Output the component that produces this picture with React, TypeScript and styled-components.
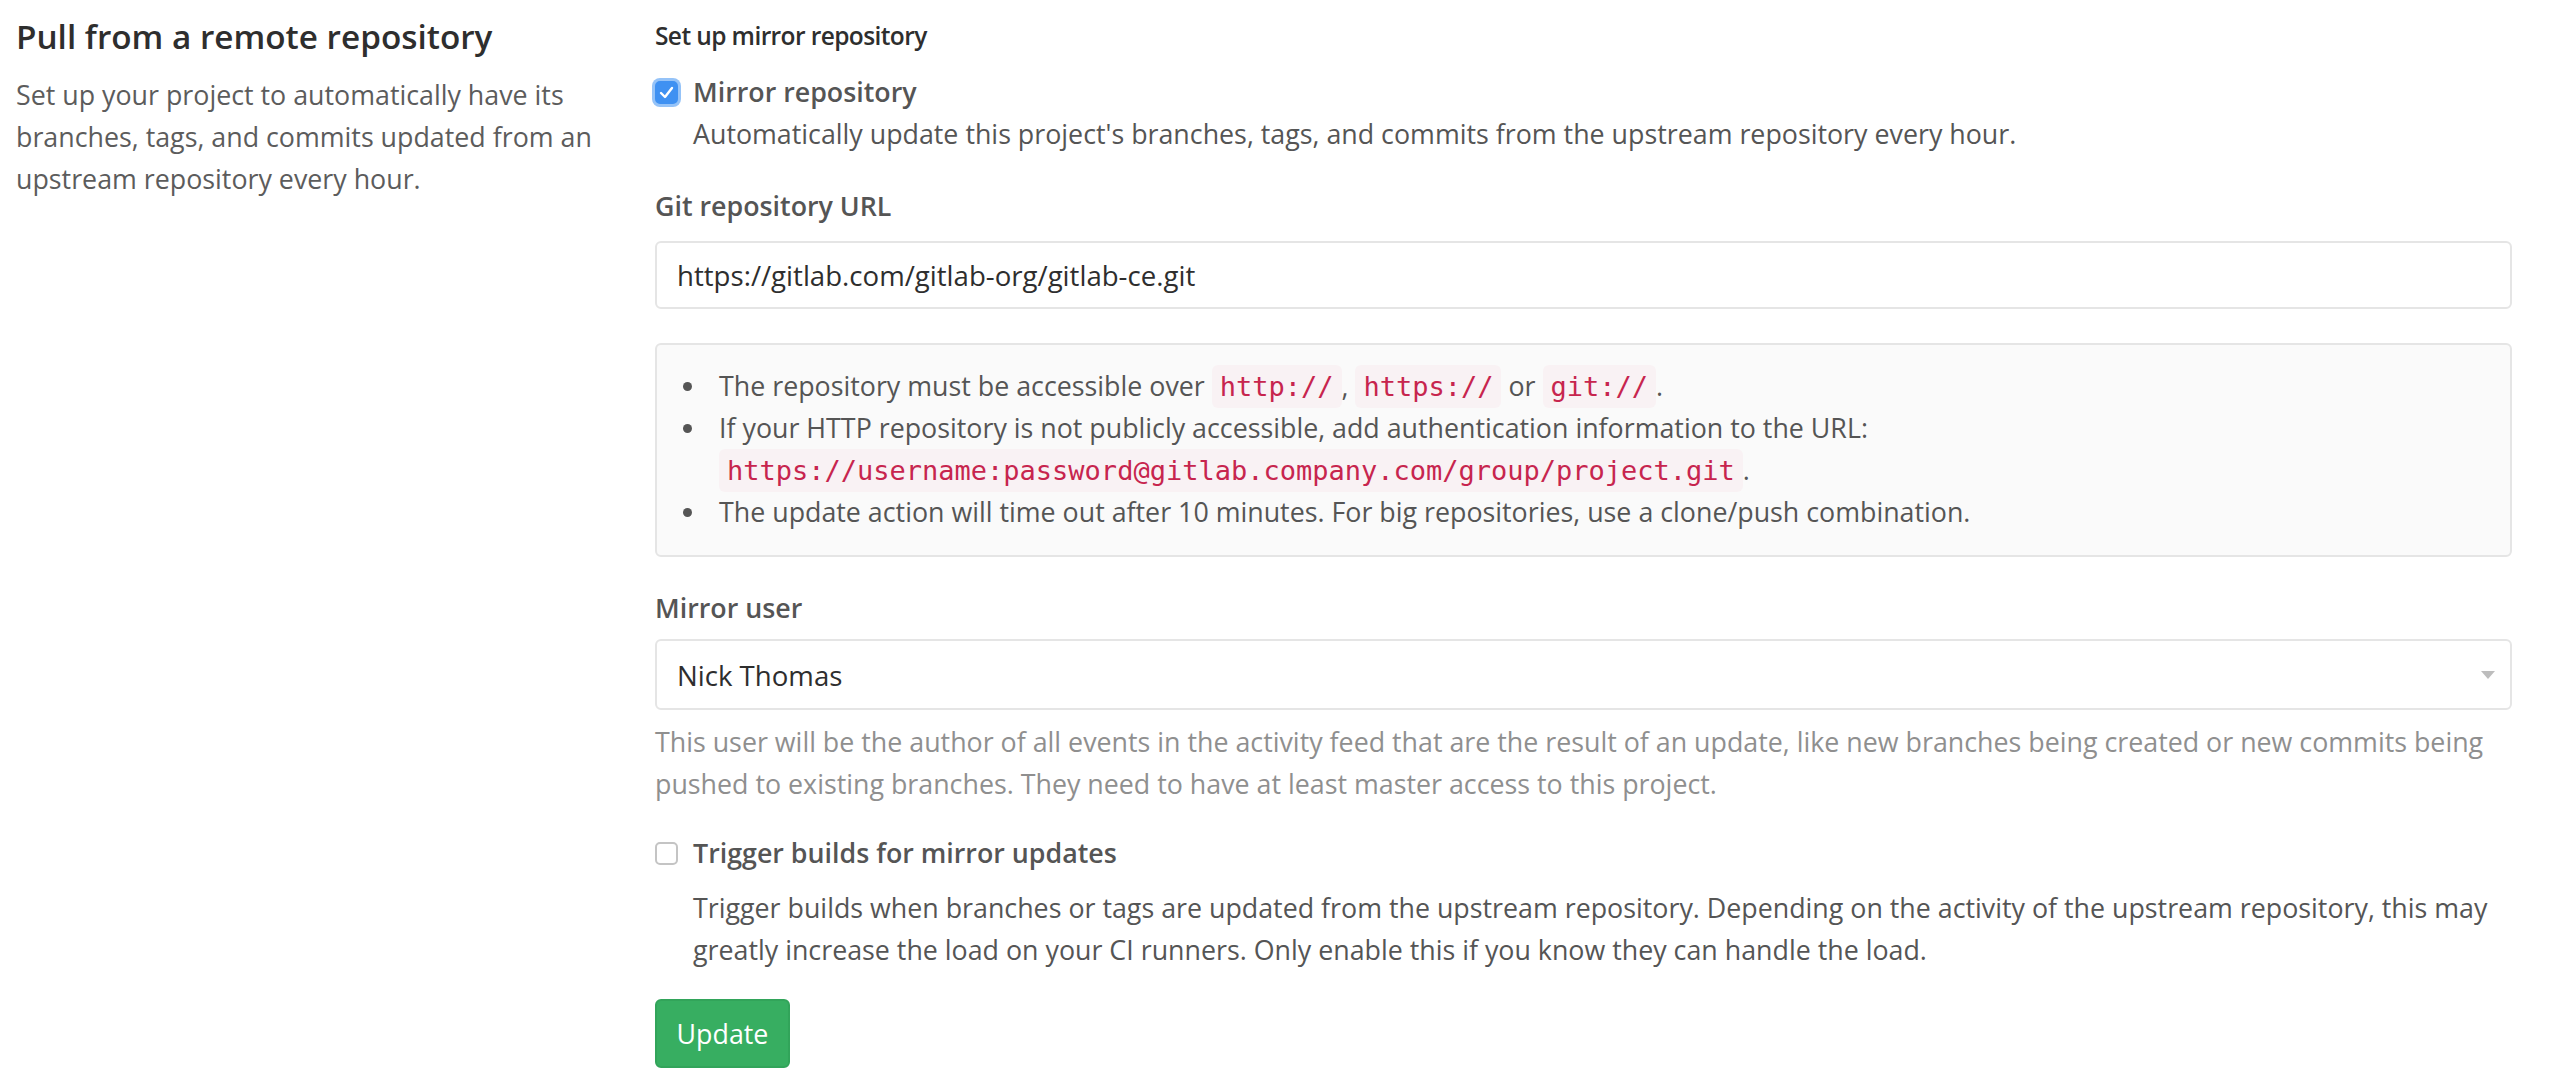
import styled, { createGlobalStyle } from "styled-components";

const Global = createGlobalStyle`
  body {
    margin: 0;
    background: #fff;
    font-family: "Open Sans", "Noto Sans", sans-serif;
    color: #555;
  }
  * {
    box-sizing: border-box;
  }
`;

const Page = styled.div`
  display: flex;
  padding: 0 40px 0 16px;
`;

const Side = styled.aside`
  width: 639px;
  flex-shrink: 0;
`;

const SideTitle = styled.h4`
  margin: 12px 0 0;
  font-size: 33.3px;
  line-height: 48px;
  font-weight: 600;
  color: #2e2e2e;
`;

const SideText = styled.p`
  margin: 14px 0 0;
  width: 610px;
  font-size: 26.8px;
  line-height: 42px;
  color: #5c5c5c;
`;

const Main = styled.main`
  flex: 1;
  min-width: 0;
  font-size: 26.8px;
  line-height: 42px;
`;

const GroupTitle = styled.h5`
  margin: 15px 0 0;
  font-size: 24.5px;
  letter-spacing: -0.6px;
  line-height: 42px;
  font-weight: 600;
  color: #2e2e2e;
`;

const CheckRow = styled.div<{ $top: number }>`
  display: grid;
  grid-template-columns: 38px 1fr;
  margin-top: ${(p) => p.$top}px;
`;

const Box = styled.span<{ $checked?: boolean }>`
  width: 23px;
  height: 23px;
  margin-top: 10px;
  border-radius: 5px;
  display: flex;
  align-items: center;
  justify-content: center;
  border: 2px solid ${(p) => (p.$checked ? "#3f91f2" : "#c4c4c4")};
  background: ${(p) => (p.$checked ? "#3f91f2" : "#fff")};
  box-shadow: ${(p) => (p.$checked ? "0 0 0 3px #95c3f8" : "none")};
`;

const CheckLabel = styled.div`
  font-weight: 600;
  color: #555;
`;

const CheckHelp = styled.div<{ $top?: number }>`
  margin-top: ${(p) => p.$top ?? 0}px;
  color: #555;
`;

const FieldLabel = styled.div<{ $top: number }>`
  margin-top: ${(p) => p.$top}px;
  font-weight: 600;
  color: #555;
`;

const Field = styled.div<{ $top?: number; $height?: number }>`
  margin-top: ${(p) => p.$top ?? 14}px;
  height: ${(p) => p.$height ?? 68}px;
  border: 2px solid #e5e5e5;
  border-radius: 6px;
  display: flex;
  align-items: center;
  justify-content: space-between;
  padding: 0 15px 0 20px;
  color: #2e2e2e;
  font-size: 27.6px;
`;

const Caret = styled.span`
  width: 0;
  height: 0;
  border-left: 7px solid transparent;
  border-right: 7px solid transparent;
  border-top: 8px solid #bdbdbd;
`;

const InfoBox = styled.div`
  margin-top: 34px;
  background: #fafafa;
  border: 2px solid #e5e5e5;
  border-radius: 6px;
  padding: 20px 20px 22px 26px;
`;

const List = styled.ul`
  margin: 0;
  padding: 0;
  list-style: none;
`;

const Item = styled.li`
  display: flex;
  align-items: flex-start;
  line-height: 42px;
`;

const Dot = styled.span`
  width: 9px;
  height: 9px;
  border-radius: 50%;
  background: #555;
  margin: 17px 27px 0 0;
  flex-shrink: 0;
`;

const Code = styled.code`
  font-family: "DejaVu Sans Mono", "Liberation Mono", monospace;
  font-size: 27px;
  line-height: 1;
  color: #c7254e;
  background: #f9f2f4;
  padding: 6px 8px;
  border-radius: 6px;
`;

const Muted = styled.p`
  margin: 11px 0 0;
  color: #8f8f8f;
`;

const Button = styled.button`
  margin-top: 28px;
  width: 135px;
  height: 69px;
  border: 2px solid #32a45a;
  border-radius: 6px;
  background: #37ae61;
  color: #fff;
  font-family: inherit;
  font-size: 26.8px;
`;

const Check = () => (
  <svg width="15" height="13" viewBox="0 0 15 13">
    <path d="M2 7l4 4 7-9" fill="none" stroke="#fff" strokeWidth="2.4" strokeLinecap="round" strokeLinejoin="round" />
  </svg>
);

export default function App() {
  return (
    <>
      <Global />
      <Page>
        <Side>
          <SideTitle>Pull from a remote repository</SideTitle>
          <SideText>
            Set up your project to automatically have its branches, tags, and commits updated from an upstream
            repository every hour.
          </SideText>
        </Side>
        <Main>
          <GroupTitle>Set up mirror repository</GroupTitle>
          <CheckRow $top={14}>
            <Box $checked>
              <Check />
            </Box>
            <div>
              <CheckLabel>Mirror repository</CheckLabel>
              <CheckHelp>
                Automatically update this project's branches, tags, and commits from the upstream repository every
                hour.
              </CheckHelp>
            </div>
          </CheckRow>
          <FieldLabel $top={30}>Git repository URL</FieldLabel>
          <Field>https://gitlab.com/gitlab-org/gitlab-ce.git</Field>
          <InfoBox>
            <List>
              <Item>
                <Dot />
                <span>
                  The repository must be accessible over <Code>http://</Code>, <Code>https://</Code> or{" "}
                  <Code>git://</Code>.
                </span>
              </Item>
              <Item>
                <Dot />
                <span>
                  If your HTTP repository is not publicly accessible, add authentication information to the URL:
                  <br />
                  <Code>https://username:password@gitlab.company.com/group/project.git</Code>.
                </span>
              </Item>
              <Item>
                <Dot />
                <span>
                  The update action will time out after 10 minutes. For big repositories, use a clone/push combination.
                </span>
              </Item>
            </List>
          </InfoBox>
          <FieldLabel $top={30}>Mirror user</FieldLabel>
          <Field $top={10} $height={71}>
            Nick Thomas
            <Caret />
          </Field>
          <Muted>
            This user will be the author of all events in the activity feed that are the result of an update, like new
            branches being created or new commits being pushed to existing branches. They need to have at least master
            access to this project.
          </Muted>
          <CheckRow $top={27}>
            <Box />
            <div>
              <CheckLabel>Trigger builds for mirror updates</CheckLabel>
              <CheckHelp $top={13}>
                Trigger builds when branches or tags are updated from the upstream repository. Depending on the activity
                of the upstream repository, this may greatly increase the load on your CI runners. Only enable this if
                you know they can handle the load.
              </CheckHelp>
            </div>
          </CheckRow>
          <Button>Update</Button>
        </Main>
      </Page>
    </>
  );
}
